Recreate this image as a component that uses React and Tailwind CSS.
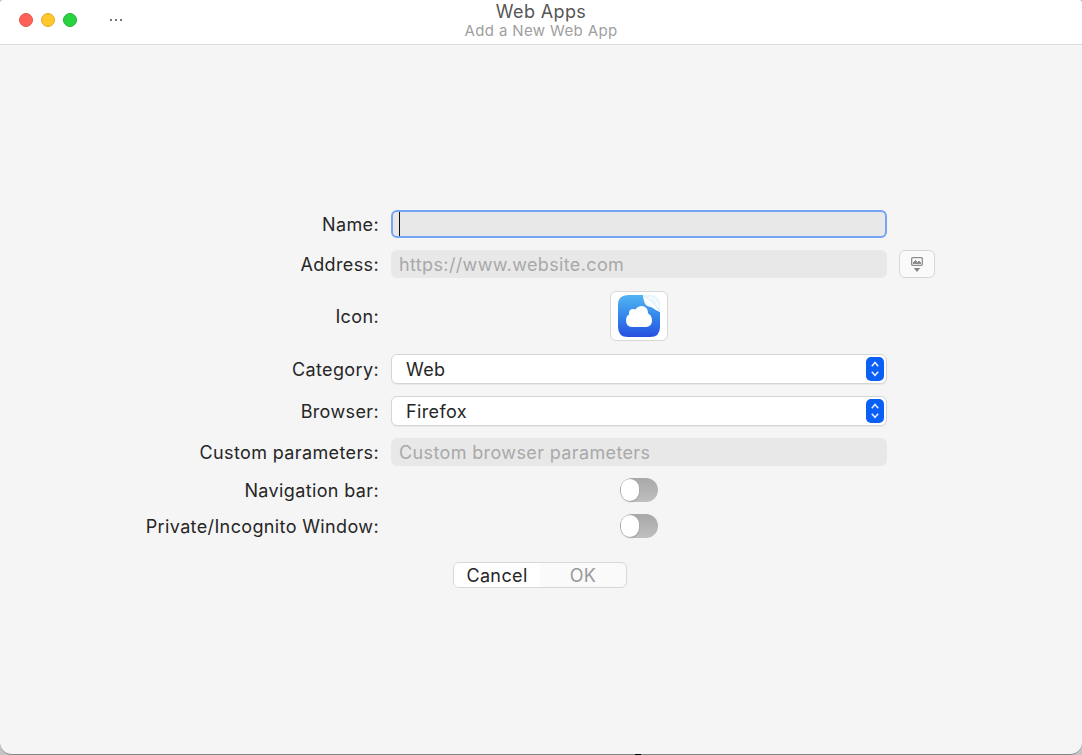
import React from "react";

function Row({ label, className, children, side }) {
  return (
    <div className={`grid grid-cols-[379px_496px_36px] items-center gap-x-3 ${className}`}>
      <label className="-mb-px text-right whitespace-nowrap leading-6">{label}</label>
      <div className="flex h-full items-center justify-center">{children}</div>
      {side}
    </div>
  );
}

function Select({ value }) {
  return (
    <button className="flex h-[30px] w-full items-center justify-between rounded-[6px] border border-[#d5d5d5] bg-white pl-[14px] pr-[2px] shadow-[0_1px_1px_rgba(0,0,0,0.05)]">
      <span className="pt-px">{value}</span>
      <span className="flex h-6 w-[18px] items-center justify-center rounded-[5px] bg-[#0a60f5]">
        <svg width="18" height="24" viewBox="0 0 18 24" fill="none" stroke="#e6effe" strokeWidth="1.5">
          <path d="M5.8 9.2 9 5.5 12.2 9.2M5.8 14.8 9 18.3 12.2 14.8" />
        </svg>
      </span>
    </button>
  );
}

function Toggle() {
  return (
    <button className="flex h-6 w-[38px] items-center rounded-full bg-linear-to-b from-[#a8a8a8] to-[#bfbfbf] pl-px">
      <span className="h-[22px] w-[18px] rounded-[9px] bg-white shadow-[0_1px_2px_rgba(0,0,0,0.2)]" />
    </button>
  );
}

function WebAppIcon() {
  return (
    <svg width="44" height="44" viewBox="0 0 44 44">
      <defs>
        <linearGradient id="sky" x1="0" y1="0" x2="0" y2="1">
          <stop offset="0" stopColor="#54b4f2" />
          <stop offset="0.5" stopColor="#3487ec" />
          <stop offset="1" stopColor="#274fe0" />
        </linearGradient>
        <linearGradient id="peel" x1="0" y1="1" x2="1" y2="0">
          <stop offset="0" stopColor="#d5e4ee" />
          <stop offset="0.5" stopColor="#ffffff" />
          <stop offset="1" stopColor="#eef5f9" />
        </linearGradient>
      </defs>
      <path d="M11 1H26Q28 8 33 12Q38 16 43 18V33Q43 43 33 43H11Q1 43 1 33V11Q1 1 11 1Z" fill="url(#sky)" />
      <path d="M26 1H33Q43 1 43 11V18Q35 8 26 1Z" fill="#e4f5fb" />
      <path d="M32 3Q40 4 41 13" fill="none" stroke="#fafeff" strokeWidth="1.5" />
      <path d="M26 1Q26.500 11 31 12.500Q37 13 43 18Q41 12 36 7.500Q31 3 26 1Z" fill="url(#peel)" />
      <path d="M27 2Q32 5 36 9T42.500 17" fill="none" stroke="#c9dbe6" strokeWidth="0.7" />
      <path d="M15 33Q9 32.5 9 26.5Q9 22 12 20.5Q11.5 15 16 15Q17.500 15 18.500 15.600Q20.500 12 25 12Q31 12.500 31.200 19.500Q35 21.500 35 26.500Q35 32 29.500 33Z" fill="white" />
    </svg>
  );
}

export default function App() {
  return (
    <div className="relative h-[755px] w-[1082px] overflow-hidden bg-[#c4c4c4] font-['Inter',sans-serif] text-[18px] tracking-[0.37px] text-[#262626] [font-optical-sizing:none]">
      <div className="flex h-full flex-col overflow-hidden rounded-t-[4px] rounded-b-[12px] border-b border-[#858585] bg-[#f5f5f5]">
        <header className="grid h-[45px] shrink-0 grid-cols-[1fr_200px_1fr] border-b border-[#dcdcdc] bg-white">
          <div className="flex h-10 items-center pl-[19px]">
            <div className="flex gap-2">
              <span className="size-[14px] rounded-full border border-[#e2574e] bg-[#ff6157]" />
              <span className="size-[14px] rounded-full border border-[#e1aa27] bg-[#ffc72e]" />
              <span className="size-[14px] rounded-full border border-[#23b339] bg-[#29d241]" />
            </div>
            <div className="ml-[33px] flex gap-[3px]">
              <span className="size-[2px] bg-[#747474]" />
              <span className="size-[2px] bg-[#747474]" />
              <span className="size-[2px] bg-[#747474]" />
            </div>
          </div>
          <div className="text-center">
            <h1 className="pt-[2px] text-[18px] leading-5 text-[#565656]">Web Apps</h1>
            <p className="text-[15px] leading-[18px] text-[#a0a0a0]">Add a New Web App</p>
          </div>
        </header>
        <main className="flex flex-1 flex-col pt-[165px]">
          <Row label="Name:" className="h-7">
            <div className="flex h-7 w-full items-center rounded-[6px] border-2 border-[#76a4f5] bg-[#e8e8e8] pl-[6px]">
              <span className="h-6 w-px bg-[#111111]" />
            </div>
          </Row>
          <Row
            label="Address:"
            className="mt-3 h-7"
            side={
              <button className="flex h-7 w-9 items-center justify-center rounded-[6px] border border-[#d6d6d6] bg-[#fafafa]">
                <svg width="12" height="16" viewBox="0 0 12 16">
                  <rect x="0.65" y="1.65" width="10.7" height="7.7" rx="1" fill="none" stroke="#8e8e8e" strokeWidth="1.3" />
                  <path d="M2 8V6H3V5H4V4H5V5H6V6H7V5H9V6H10V8Z" fill="#8e8e8e" />
                  <path d="M2.800 12H9.200L6 16Z" fill="#858585" />
                </svg>
              </button>
            }
          >
            <div className="flex h-7 w-full items-center rounded-[6px] bg-[#e8e8e8] pt-px pl-2 text-[#a9a9a9]">https://www.website.com</div>
          </Row>
          <Row label="Icon:" className="mt-[13px] h-[50px]">
            <button className="flex h-[50px] w-[58px] items-center justify-center rounded-[6px] border border-[#d8d8d8] bg-white">
              <WebAppIcon />
            </button>
          </Row>
          <Row label="Category:" className="mt-[13px] h-[30px]">
            <Select value="Web" />
          </Row>
          <Row label="Browser:" className="mt-3 h-[30px]">
            <Select value="Firefox" />
          </Row>
          <Row label="Custom parameters:" className="mt-3 h-7">
            <div className="flex h-7 w-full items-center rounded-[6px] bg-[#e8e8e8] pt-px pl-2 text-[#a9a9a9]">Custom browser parameters</div>
          </Row>
          <Row label="Navigation bar:" className="mt-3 h-6 grid-rows-[24px]">
            <Toggle />
          </Row>
          <Row label="Private/Incognito Window:" className="mt-3 h-6 grid-rows-[24px]">
            <Toggle />
          </Row>
          <div className="mt-6 ml-[453px] flex h-[26px] w-[174px] overflow-hidden rounded-[6px] border border-[#d8d8d8] bg-[#fafafa]">
            <button className="flex-1 bg-white pt-px leading-6">Cancel</button>
            <button className="flex-1 pt-px leading-6 text-[#999999]">OK</button>
          </div>
        </main>
      </div>
      <span className="absolute bottom-0 left-[635px] h-px w-[6px] bg-black" />
    </div>
  );
}
